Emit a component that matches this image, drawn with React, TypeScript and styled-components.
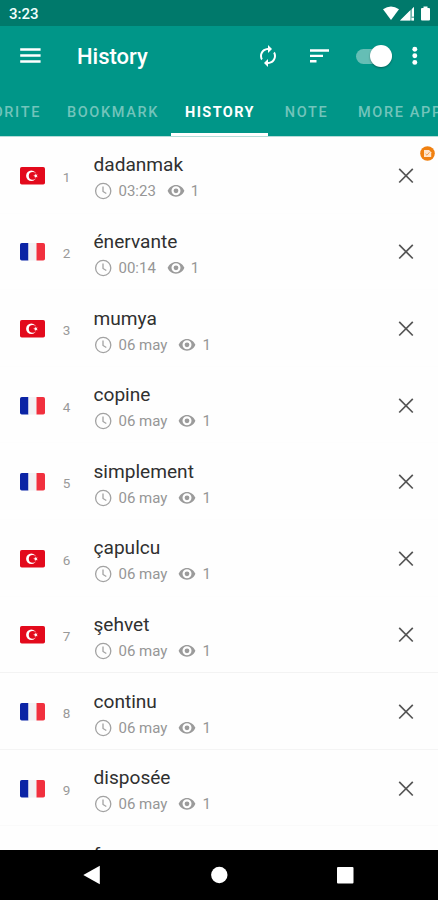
import React from "react";
import styled, { createGlobalStyle } from "styled-components";

const GlobalStyle = createGlobalStyle`
  * { box-sizing: border-box; }
  body { margin: 0; background: #fff; font-family: Roboto, "Noto Sans", sans-serif; }
`;

const Screen = styled.div`
  width: 438px;
  height: 900px;
  display: flex;
  flex-direction: column;
  overflow: hidden;
  background: #fefefe;
`;

const StatusBar = styled.div`
  flex: 0 0 26px;
  display: flex;
  justify-content: space-between;
  align-items: center;
  padding: 2px 7px 0 9px;
  background: #00796b;
  color: #f1fffc;
  font-size: 15px;
  font-weight: 500;
`;

const StatusIcons = styled.svg`
  display: block;
  width: 48px;
  height: 16px;
`;

const Toolbar = styled.header`
  flex: 0 0 60px;
  display: grid;
  grid-template-columns: 57px 178px 51px 50px 56px 1fr;
  align-items: center;
  padding-left: 20px;
  background: #009688;
  color: #fff;
`;

const Title = styled.h1`
  margin: 0;
  padding-top: 2px;
  font-size: 22px;
  line-height: 26px;
  font-weight: 500;
`;

const IconButton = styled.button`
  width: 24px;
  height: 24px;
  padding: 0;
  border: 0;
  background: none;
  color: inherit;
  svg { display: block; }
`;

const Toggle = styled.div`
  width: 36px;
  height: 22px;
  display: flex;
  align-items: center;
`;

const Track = styled.div`
  flex: 1;
  height: 15px;
  display: flex;
  align-items: center;
  justify-content: flex-end;
  border-radius: 8px;
  background: #65beb5;
`;

const Thumb = styled.div`
  width: 22px;
  height: 22px;
  border-radius: 50%;
  background: #fff;
  box-shadow: 0 1px 2px rgba(0, 0, 0, 0.35);
`;

const TabStrip = styled.nav`
  flex: 0 0 51px;
  display: flex;
  overflow: hidden;
  background: #009688;
  border-bottom: 1px solid #b5dcd8;
`;

const Tab = styled.div<{ $width: number; $active?: boolean; $align?: string; $pad?: string }>`
  flex: 0 0 ${(p) => p.$width}px;
  min-width: 0;
  display: flex;
  align-items: center;
  justify-content: ${(p) => p.$align ?? "center"};
  padding: ${(p) => p.$pad ?? "6px 0 0 1px"};
  border-bottom: 3px solid ${(p) => (p.$active ? "#fff" : "transparent")};
  color: ${(p) => (p.$active ? "#fff" : "#72c4bb")};
  font-size: 14.5px;
  font-weight: ${(p) => (p.$active ? 700 : 500)};
  letter-spacing: ${(p) => (p.$active ? 1.4 : 1.65)}px;
  white-space: nowrap;
`;

const List = styled.main`
  position: relative;
  flex: 1;
  min-height: 0;
  overflow: hidden;
`;

const Row = styled.article<{ $divider: string }>`
  height: 76.62px;
  display: grid;
  grid-template-columns: 34px 25px 1fr 24px;
  align-items: center;
  padding: 2px 20px 0;
  border-bottom: 1px solid ${(p) => p.$divider};
`;

const FlagSvg = styled.svg`
  display: block;
  width: 25px;
  height: 18px;
`;

const Index = styled.span`
  justify-self: center;
  padding-top: 2px;
  color: #999;
  font-size: 13.5px;
`;

const Entry = styled.div`
  padding: 5px 0 0 14.5px;
`;

const Word = styled.div`
  height: 26px;
  color: #303030;
  font-size: 19.1px;
  line-height: 26px;
`;

const Meta = styled.div`
  height: 26px;
  display: flex;
  align-items: center;
  color: #969696;
  font-size: 15px;
  line-height: 26px;
  svg { flex: none; }
`;

const Time = styled.span`
  margin: 0 11px 0 7px;
`;

const Views = styled.span`
  margin-left: 6px;
`;

const AdBadge = styled.svg`
  position: absolute;
  top: 9px;
  right: 3px;
  width: 15px;
  height: 15px;
`;

const NavBar = styled.footer`
  flex: 0 0 50px;
  display: grid;
  grid-template-columns: 128px 110px 1fr;
  align-items: center;
  padding-left: 82px;
  background: #000;
  svg { display: block; }
`;

type Country = "tr" | "fr";

function Flag({ country }: { country: Country }) {
  return country === "tr" ? (
    <FlagSvg viewBox="0 0 25 18">
      <rect width="25" height="17.6" rx="1.8" fill="#e30a1c" />
      <circle cx="11.3" cy="8.8" r="5.2" fill="#fff" />
      <circle cx="12.7" cy="8.8" r="3.9" fill="#e30a1c" />
      <path d="M13.2 8.8l1.7-.6V6.5l1.1 1.4 1.7-.5-1 1.4 1 1.5-1.7-.6-1.1 1.5V9.4z" fill="#fff" />
    </FlagSvg>
  ) : (
    <FlagSvg viewBox="0 0 25 18">
      <path d="M1.8 0h6.7v17.6H1.8A1.8 1.8 0 0 1 0 15.8V1.8A1.8 1.8 0 0 1 1.8 0z" fill="#0b24a5" />
      <path d="M8.5 0h8v17.6h-8z" fill="#f2f2f4" />
      <path d="M16.5 0h6.7A1.8 1.8 0 0 1 25 1.8v14a1.8 1.8 0 0 1-1.8 1.8h-6.7z" fill="#f1303e" />
    </FlagSvg>
  );
}

const Clock = () => (
  <svg width="18" height="18" viewBox="0 0 18 18" fill="none" stroke="#a2a2a2" strokeWidth="1.3">
    <circle cx="9.2" cy="9" r="7.6" />
    <path d="M9 4.5V9.5l3.3 2" />
  </svg>
);

const Eye = () => (
  <svg width="18" height="14" viewBox="0 0 18 14">
    <path
      fillRule="evenodd"
      fill="#9b9b9b"
      d="M9 .9C5.2 .9 2 3.3 .6 6.8 2 10.3 5.2 12.7 9 12.7s7-2.4 8.4-5.9C16 3.3 12.8 .9 9 .9zM9 2.3a4.5 4.5 0 1 1 0 9 4.5 4.5 0 0 1 0-9zM9 4.4a2.4 2.4 0 1 0 0 4.8 2.4 2.4 0 0 0 0-4.8z"
    />
  </svg>
);

const Cross = () => (
  <svg width="24" height="24" viewBox="0 0 24 24" fill="none" stroke="#555" strokeWidth="1.7">
    <path d="M5.2 4.9l13.6 13.6M18.8 4.9L5.2 18.5" />
  </svg>
);

const entries: { word: string; time: string; country: Country; divider?: string }[] = [
  { word: "dadanmak", time: "03:23", country: "tr" },
  { word: "énervante", time: "00:14", country: "fr" },
  { word: "mumya", time: "06 may", country: "tr" },
  { word: "copine", time: "06 may", country: "fr" },
  { word: "simplement", time: "06 may", country: "fr" },
  { word: "çapulcu", time: "06 may", country: "tr" },
  { word: "şehvet", time: "06 may", country: "tr", divider: "#f3f3f3" },
  { word: "continu", time: "06 may", country: "fr", divider: "#f4f4f4" },
  { word: "disposée", time: "06 may", country: "fr", divider: "#fafafa" },
  { word: "f", time: "06 may", country: "fr" },
];

export default function App() {
  return (
    <>
      <GlobalStyle />
      <Screen>
        <StatusBar>
          <span>3:23</span>
          <StatusIcons viewBox="0 0 48 16" fill="#fff">
            <path d="M0 3.2Q8-2.2 16 3.2L8 14z" />
            <path d="M17 14.5L31 .8v13.7z" opacity=".45" />
            <path d="M17 14.5L27.300 4.300v10.200zM28.500 12H31v2.500h-2.500zM29 3l2-2v9.500h-2z" />
            <path d="M40.500.5h4v1.500h1.500q1 0 1 1V13.500q0 1-1 1h-7q-1 0-1-1V3q0-1 1-1h1.500z" />
          </StatusIcons>
        </StatusBar>
        <Toolbar>
          <IconButton aria-label="Menu">
            <svg width="24" height="24" viewBox="0 0 24 24" stroke="#fff" strokeWidth="2.4">
              <path d="M.2 5.5h20.4M.2 11.5h20.4M.2 17.5h20.4" />
            </svg>
          </IconButton>
          <Title>History</Title>
          <IconButton aria-label="Refresh">
            <svg width="26" height="24" viewBox="0 0 24 24" fill="#fff">
              <path d="M12 6v3l4-4-4-4v3c-4.42 0-8 3.58-8 8 0 1.57.46 3.03 1.24 4.26L6.7 14.8A5.87 5.87 0 0 1 6 12c0-3.31 2.69-6 6-6zm6.76 1.74L17.3 9.2c.44.84.7 1.79.7 2.8 0 3.31-2.69 6-6 6v-3l-4 4 4 4v-3c4.42 0 8-3.58 8-8 0-1.57-.46-3.03-1.24-4.26z" />
            </svg>
          </IconButton>
          <IconButton aria-label="Sort">
            <svg width="24" height="24" viewBox="0 0 24 24" stroke="#fff" strokeWidth="2.4">
              <path d="M4 6.5h19M4 11.9h13M4 17.3h6.5" />
            </svg>
          </IconButton>
          <Toggle>
            <Track>
              <Thumb />
            </Track>
          </Toggle>
          <IconButton aria-label="More options">
            <svg width="8" height="24" viewBox="0 0 8 24" fill="#fff">
              <circle cx="2.8" cy="5.2" r="2.45" />
              <circle cx="2.8" cy="11.8" r="2.45" />
              <circle cx="2.8" cy="18.4" r="2.45" />
            </svg>
          </IconButton>
        </Toolbar>
        <TabStrip>
          <Tab $width={54} $align="flex-end" $pad="6px 13px 0 0">FAVORITE</Tab>
          <Tab $width={117}>BOOKMARK</Tab>
          <Tab $width={97} $active>HISTORY</Tab>
          <Tab $width={76}>NOTE</Tab>
          <Tab $width={118} $align="flex-start" $pad="6px 0 0 14px">MORE APPS</Tab>
        </TabStrip>
        <List>
          {entries.map((entry, i) => (
            <Row key={entry.word} $divider={entry.divider ?? "#fdfdfd"}>
              <Flag country={entry.country} />
              <Index>{i + 1}</Index>
              <Entry>
                <Word>{entry.word}</Word>
                <Meta>
                  <Clock />
                  <Time>{entry.time}</Time>
                  <Eye />
                  <Views>1</Views>
                </Meta>
              </Entry>
              <IconButton aria-label="Remove">
                <Cross />
              </IconButton>
            </Row>
          ))}
          <AdBadge viewBox="0 0 15 15">
            <circle cx="7.5" cy="7.5" r="7.3" fill="#f08010" />
            <path d="M4 4h5l2.2 2.2V11H4z" fill="#ffe5cc" />
            <path d="M5.5 7.8L7 9.2l2.5-3" fill="none" stroke="#f5a050" />
          </AdBadge>
        </List>
        <NavBar>
          <svg width="20" height="20" viewBox="0 0 20 20" fill="#fff">
            <path d="M1.3 10L17.8 .8v18.4z" />
          </svg>
          <svg width="18" height="18" viewBox="0 0 18 18" fill="#fff">
            <circle cx="9.3" cy="9" r="8.2" />
          </svg>
          <svg width="34" height="18" viewBox="0 0 34 18" fill="#fff">
            <rect x="17" y="1" width="16.5" height="16.5" rx="1" />
          </svg>
        </NavBar>
      </Screen>
    </>
  );
}
